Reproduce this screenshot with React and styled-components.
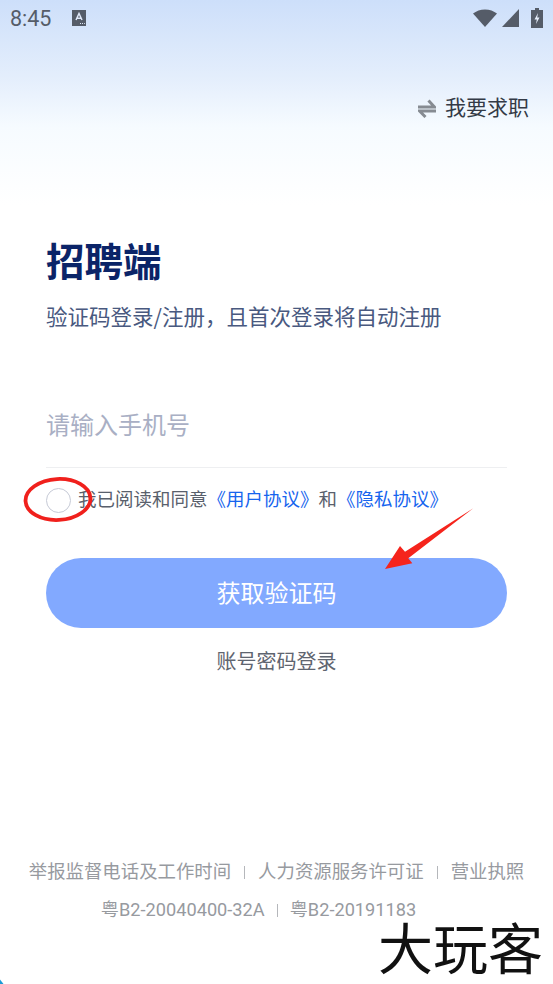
import React from "react";
import styled, { createGlobalStyle } from "styled-components";

const cjk = `"Noto Sans CJK SC", "Noto Sans", sans-serif`;

const Global = createGlobalStyle`
  html, body {
    margin: 0;
    padding: 0;
    background: #fff;
  }
  * { box-sizing: border-box; }
`;

export default function App() {
  return (
    <Page>
      <Global />
      <Header>
        <StatusBar>
          <Clock>8:45</Clock>
          <NoticeIcon viewBox="0 0 14 16">
            <path d="M0 0h14v16H0z" fill="#555c68" />
            <path d="M4 10 7 3.5l3 6.5M5 8.2h4" fill="none" stroke="#dfe8f8" strokeWidth="1.5" />
            <path d="M8 13.5h1M10 13.5h1M12 13.5h.8" stroke="#dfe8f8" strokeWidth="1" />
          </NoticeIcon>
          <StatusIcons>
            <svg width="24" height="18" viewBox="0 0 24 18">
              <path d="M0 4.5C3.2 2 7.4 .4 12 .4S20.8 2 24 4.5L12 18z" fill="#555c68" />
            </svg>
            <svg width="17" height="18" viewBox="0 0 17 18">
              <path d="M17 0v18H0z" fill="#555c68" />
            </svg>
            <BatteryIcon viewBox="0 0 12 20">
              <path d="M4 0h4v2h4v18H0V2h4z" fill="#555c68" />
              <path d="M7 5 3.5 11.5h2.300L5 16l3.500-6.500H6.200z" fill="#e6eefb" />
            </BatteryIcon>
          </StatusIcons>
        </StatusBar>
        <SwitchRow>
          <svg width="18" height="19" viewBox="0 0 18 19">
            <path d="M0 8h16.5L10.5 1.5" fill="none" stroke="#868b92" strokeWidth="3" />
            <path d="M18 12H1.5L7.5 18" fill="none" stroke="#868b92" strokeWidth="3" />
          </svg>
          <SwitchLabel>我要求职</SwitchLabel>
        </SwitchRow>
      </Header>

      <Form>
        <Title>招聘端</Title>
        <Subtitle>验证码登录/注册，且首次登录将自动注册</Subtitle>
        <PhoneInput>请输入手机号</PhoneInput>
        <AgreeRow>
          <Radio />
          <AgreeText>
            我已阅读和同意<Link>《用户协议》</Link>和<Link>《隐私协议》</Link>
          </AgreeText>
        </AgreeRow>
        <SubmitButton>获取验证码</SubmitButton>
        <PasswordLogin>账号密码登录</PasswordLogin>
      </Form>

      <Footer>
        <FooterRow $gap={13} $size={18.4}>
          <span>举报监督电话及工作时间</span>
          <Divider />
          <span>人力资源服务许可证</span>
          <Divider />
          <span>营业执照</span>
        </FooterRow>
        <FooterRow $gap={12} $size={18.2} $shift={36}>
          <span>粤B2-20040400-32A</span>
          <Divider />
          <span>粤B2-20191183</span>
        </FooterRow>
      </Footer>

      {/* hand-drawn marks that sit over the screenshot */}
      <Marks viewBox="0 0 553 984">
        <ellipse cx="58" cy="499.5" rx="32.5" ry="20.5" fill="none" stroke="#f0201c" strokeWidth="3.8" transform="rotate(-3 58 499.5)" />
        <path d="M473.3 508.3 408.3 558.3 412.3 563.3 385 569 400 546 405 551.7z" fill="#f5241c" />
        <path d="M0 979.5 3.5 984H0z" fill="#1a9ad6" />
      </Marks>
      <Watermark>大玩客</Watermark>
    </Page>
  );
}

const Page = styled.div`
  position: relative;
  width: 553px;
  height: 984px;
  overflow: hidden;
  background: #fff;
`;

const Header = styled.header`
  height: 205px;
  padding: 0 24px 0 10px;
  background: linear-gradient(180deg, #cddffa 0%, #e4eefc 38%, #f6fbff 62%, #fff 100%);
`;

const StatusBar = styled.div`
  display: flex;
  align-items: center;
  height: 36px;
  margin-right: -14px;
`;

const Clock = styled.span`
  font: 400 21.5px Roboto, sans-serif;
  color: #555c68;
`;

const NoticeIcon = styled.svg`
  width: 14px;
  height: 16px;
  margin-left: 21px;
`;

const StatusIcons = styled.div`
  display: flex;
  align-items: center;
  gap: 5px;
  margin-left: auto;
`;

const BatteryIcon = styled.svg`
  width: 12px;
  height: 20px;
  margin-left: 7px;
`;

const SwitchRow = styled.div`
  display: flex;
  justify-content: flex-end;
  align-items: center;
  gap: 9px;
  margin-top: 51px;
`;

const SwitchLabel = styled.span`
  padding-bottom: 4px;
  font: 400 21px/38px ${cjk};
  color: #333a46;
`;

const Form = styled.main`
  padding: 0 46px;
`;

const Title = styled.h1`
  margin: 26px 0 0;
  font: 700 38.5px/56px ${cjk};
  color: #0b2468;
`;

const Subtitle = styled.p`
  margin: 14px 0 0;
  font: 400 21.5px/30px ${cjk};
  color: #49597f;
  white-space: nowrap;
`;

const PhoneInput = styled.div`
  height: 64px;
  margin-top: 73px;
  font: 400 24px/40px ${cjk};
  color: #a9afc4;
  border-bottom: 1px solid #eeeff1;
`;

const AgreeRow = styled.div`
  display: flex;
  align-items: center;
  gap: 7px;
  height: 28px;
  margin-top: 18px;
`;

const Radio = styled.span`
  flex: none;
  width: 25px;
  height: 25px;
  border: 1.5px solid #c6cad6;
  border-radius: 50%;
`;

const AgreeText = styled.span`
  padding-bottom: 4px;
  font: 400 18.5px/28px ${cjk};
  color: #59606c;
  white-space: nowrap;
`;

const Link = styled.span`
  color: #1664ee;
`;

const SubmitButton = styled.button`
  display: block;
  width: 461px;
  height: 70px;
  margin-top: 44px;
  padding: 0 0 4px;
  border: 0;
  border-radius: 35px;
  background: #82a9ff;
  color: #fff;
  font: 400 24px ${cjk};
`;

const PasswordLogin = styled.div`
  margin-top: 18px;
  text-align: center;
  font: 400 20px/30px ${cjk};
  color: #5f6570;
`;

const Footer = styled.footer`
  display: flex;
  flex-direction: column;
  gap: 18px;
  margin-top: 186px;
`;

const FooterRow = styled.div`
  display: flex;
  justify-content: center;
  align-items: center;
  gap: ${(p) => p.$gap}px;
  height: 20px;
  margin-right: ${(p) => p.$shift || 0}px;
  font: 400 ${(p) => p.$size}px/20px Roboto, ${cjk};
  color: #979a9f;
  white-space: nowrap;
`;

const Divider = styled.i`
  width: 1px;
  height: 13px;
  background: #b5b7bb;
`;

const Marks = styled.svg`
  position: absolute;
  inset: 0;
  width: 553px;
  height: 984px;
  pointer-events: none;
`;

const Watermark = styled.div`
  position: absolute;
  left: 378px;
  top: 920px;
  font: 400 55px/50px ${cjk};
  color: #111;
  white-space: nowrap;
`;
